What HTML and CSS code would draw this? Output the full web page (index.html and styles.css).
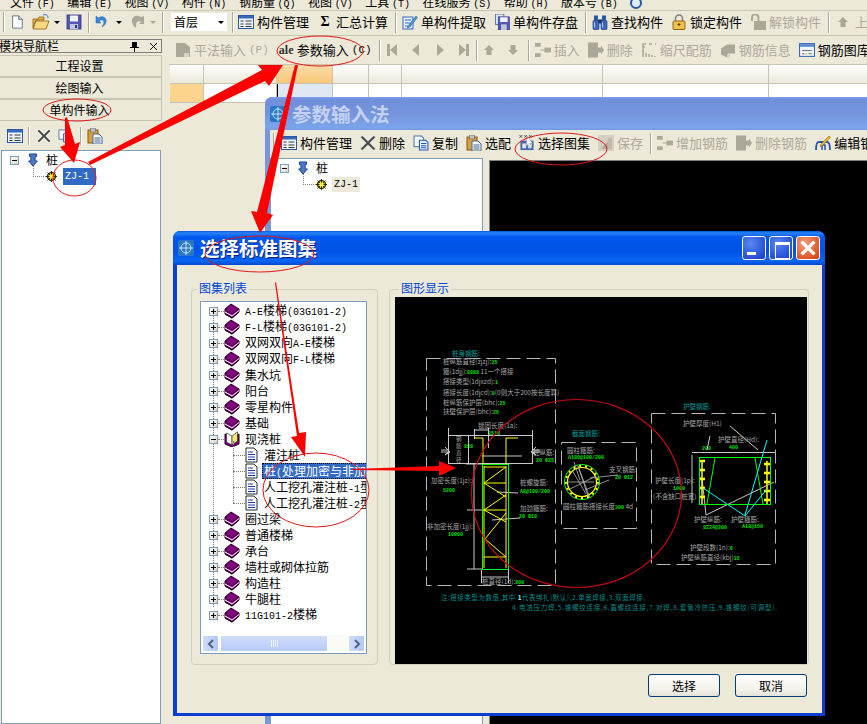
FILE: index.html
```html
<!DOCTYPE html>
<html lang="zh">
<head>
<meta charset="utf-8">
<title>参数输入法</title>
<link rel="stylesheet" href="styles.css">
</head>
<body>
<svg class="defs" width="0" height="0" aria-hidden="true">
  <defs>
    <symbol id="i-new" viewBox="0 0 16 16"><path d="M3 1h7l4 4v10H3z" fill="#fff" stroke="#5a6a80"/><path d="M10 1v4h4" fill="#c8d8e8" stroke="#5a6a80"/></symbol>
    <symbol id="i-open" viewBox="0 0 18 16"><path d="M1 5h5l1-2h5v3H4L1 14z" fill="#e8b040" stroke="#906010" stroke-width=".8"/><path d="M4 7h13l-3 8H1z" fill="#f8d880" stroke="#906010" stroke-width=".8"/><path d="M11 1c3-1 5 0 5 3" fill="none" stroke="#3070c0"/></symbol>
    <symbol id="i-save" viewBox="0 0 16 16"><rect x="1" y="1" width="14" height="14" fill="#5058b8" stroke="#303078" stroke-width=".8"/><rect x="4" y="1.500" width="8" height="6" fill="#f0f4ff"/><rect x="4" y="10" width="8" height="5" fill="#c0c8d8"/><rect x="9" y="11" width="2" height="3" fill="#303078"/></symbol>
    <symbol id="i-undo" viewBox="0 0 14 14"><path d="M3 3c5-3 9 0 8 4-.5 2-2 4-4 5 1-2 2-3 2-5 0-2-3-3-5-1l2 2H1V1z" fill="#3a88d8" stroke="#1860b0" stroke-width=".5"/></symbol>
    <symbol id="i-redo" viewBox="0 0 16 16"><path d="M12 3C7 0 2 3 3 8c.5 2 2 5 4 6 0-2 0-5 1-6 1-1 3-1 4 0l-2 2h5V2z" fill="#aca899"/></symbol>
    <symbol id="i-mgr" viewBox="0 0 16 14"><rect x=".5" y=".5" width="15" height="13" fill="#f0f4fc" stroke="#2858a8"/><rect x="1" y="1" width="14" height="2.500" fill="#3868b8"/><path d="M2.500 6h3M2.500 9h3M2.500 11.500h3M7.500 6h6M7.500 9h6M7.500 11.500h6" stroke="#303840"/></symbol>
    <symbol id="i-extract" viewBox="0 0 16 16"><rect x="1" y="3" width="10" height="12" fill="#e8f0fc" stroke="#3868b8"/><path d="M3 6h6M3 9h5M3 12h3" stroke="#3868b8"/><path d="M6 12L14 2l1.500 1.500L8 13l-3 1z" fill="#4898d8" stroke="#205890" stroke-width=".5"/></symbol>
    <symbol id="i-store" viewBox="0 0 16 17"><rect x="1" y="0" width="9" height="11" fill="#d8e4f8" stroke="#405888" stroke-width=".8"/><rect x="4" y="3" width="12" height="14" fill="#5058b8" stroke="#303078" stroke-width=".6"/><rect x="6" y="3.500" width="8" height="5" fill="#f0f4ff"/><rect x="7" y="11" width="6" height="6" fill="#c0c8d8"/></symbol>
    <symbol id="i-find" viewBox="0 0 16 15"><rect x="2" y="1" width="4" height="5" fill="#2858a8"/><rect x="10" y="1" width="4" height="5" fill="#2858a8"/><rect x="6" y="5" width="4" height="4" fill="#203860"/><rect x="1" y="6" width="6" height="9" rx="1" fill="#3868c8" stroke="#183060" stroke-width=".6"/><rect x="9" y="6" width="6" height="9" rx="1" fill="#3868c8" stroke="#183060" stroke-width=".6"/><path d="M2.500 8v5M10.500 8v5" stroke="#b8d0f0"/></symbol>
    <symbol id="i-lock" viewBox="0 0 14 16"><path d="M3.500 8V4.500a3.500 3.500 0 0 1 7 0V8" fill="none" stroke="#808080" stroke-width="1.500"/><rect x="1" y="7" width="12" height="8.500" rx="1" fill="#f0c050" stroke="#906810"/><path d="M7 9v3M5.500 10.500h3" stroke="#604000"/></symbol>
    <symbol id="i-unlock" viewBox="0 0 16 16"><path d="M2 7V3.500a3.200 3.200 0 0 1 6.400 0V7" fill="none" stroke="#aca899" stroke-width="2"/><rect x="4" y="7" width="12" height="9" fill="#aca899"/></symbol>
    <symbol id="i-up" viewBox="0 0 12 12"><path d="M6 1l5 5H8.500v5h-5V6H1z" fill="#aca899"/></symbol>
    <symbol id="i-down" viewBox="0 0 12 12"><path d="M6 11L1 6h2.500V1h5v5H11z" fill="#aca899"/></symbol>
    <symbol id="i-note" viewBox="0 0 16 16"><path d="M1 1h9l5 4v10H1z" fill="#aca899"/><rect x="9" y="11" width="5" height="4" fill="#d8d4c4"/></symbol>
    <symbol id="i-first" viewBox="0 0 12 14"><rect x="1" y="1" width="3" height="12" fill="#aca899"/><path d="M11 1v12L4 7z" fill="#aca899"/></symbol>
    <symbol id="i-prev" viewBox="0 0 12 14"><path d="M9 1v12L2 7z" fill="#aca899"/></symbol>
    <symbol id="i-next" viewBox="0 0 12 14"><path d="M3 1v12l7-6z" fill="#aca899"/></symbol>
    <symbol id="i-last" viewBox="0 0 12 14"><rect x="8" y="1" width="3" height="12" fill="#aca899"/><path d="M1 1v12l7-6z" fill="#aca899"/></symbol>
    <symbol id="i-insert" viewBox="0 0 17 15"><rect x="0" y="0" width="6" height="4" fill="#aca899"/><rect x="0" y="11" width="6" height="4" fill="#aca899"/><rect x="10" y="5" width="7" height="5" fill="#aca899"/><path d="M6 7.500h4" stroke="#aca899"/></symbol>
    <symbol id="i-remove" viewBox="0 0 16 15"><rect x="0" y="0" width="10" height="15" fill="#aca899"/><path d="M10 5h3V3l3 4.500-3 4.500v-2h-3z" fill="#aca899"/></symbol>
    <symbol id="i-scale" viewBox="0 0 14 16"><path d="M1 15V2h3M7 2h3M13 2h1M2 4v2M1 9h1M4 15v-4M7 15v-3M10 15v-2M13 15v-1" fill="none" stroke="#aca899" stroke-width="1.500"/></symbol>
    <symbol id="i-info" viewBox="0 0 16 15"><path d="M1 6l6-4h8v9H8l-1 4-6-3z" fill="#aca899"/><rect x="7" y="12" width="3" height="3" fill="#d8d4c4"/></symbol>
    <symbol id="i-lib" viewBox="0 0 15 13"><rect x=".5" y=".5" width="14" height="12" fill="#f0f4fc" stroke="#3868b8"/><rect x="1" y="1" width="13" height="2.500" fill="#5888d0"/><path d="M3 7h9" stroke="#707880"/><path d="M3 10h2" stroke="#d83020"/><path d="M6 10h2" stroke="#e8c020"/><path d="M9 10h3" stroke="#30a040"/></symbol>
    <symbol id="i-del" viewBox="0 0 14 14"><path d="M2 1l5 5 5-5 1 1-5 5 5 5-1 1-5-5-5 5-1-1 5-5-5-5z" fill="#404850" stroke="#404850" stroke-width=".6"/></symbol>
    <symbol id="i-copy" viewBox="0 0 15 15"><path d="M1 1h7l2 2v8H1z" fill="#f4f8ff" stroke="#4878b8"/><path d="M6 5h6l2 2v7H6z" fill="#e0ecff" stroke="#2858a8"/><path d="M7.500 8h5M7.500 10h5M7.500 12h5" stroke="#2858a8"/></symbol>
    <symbol id="i-paste" viewBox="0 0 16 16"><rect x="1" y="2" width="10" height="13" fill="#d8a040" stroke="#805810"/><rect x="3.500" y="0" width="5" height="4" fill="#c0c0c0" stroke="#606060" stroke-width=".6"/><path d="M6 6h6l3 3v7H6z" fill="#f4f8ff" stroke="#48688c"/><path d="M7.500 10h6M7.500 12h6M7.500 14h6" stroke="#48688c"/></symbol>
    <symbol id="i-atlas" viewBox="0 0 16 17"><path d="M0 0l3 3M3 0L0 3M5 0l3 3M8 0L5 3M10 0l3 3M13 0l-3 3" stroke="#303030" stroke-width=".8"/><rect x="1" y="6" width="14" height="10" fill="#4868b0"/><path d="M3 9h4v5H3zM9 9h4v5H9z" fill="#e0e8f8"/><path d="M8 1l6 8-3 0 2 4-2 1-2-4-2 2z" fill="#fff" stroke="#8090a0" stroke-width=".6"/></symbol>
    <symbol id="i-savegray" viewBox="0 0 15 15"><rect x="0" y="0" width="15" height="15" fill="#d4d0c0"/><path d="M3 13L13 2v11z" fill="#aca899"/><rect x="9" y="3" width="4" height="10" fill="#c0bcac"/></symbol>
    <symbol id="i-edit" viewBox="0 0 16 16"><path d="M1 15c0-6 1-8 3-8h8c2 0 3 2 3 8" fill="none" stroke="#2858a8" stroke-width="1.800"/><path d="M7 15v-5h3v5" fill="none" stroke="#2858a8" stroke-width="1.500"/><path d="M6 9L14 1l1.500 1.500-8 8-2.500 1z" fill="#e8b830" stroke="#805810" stroke-width=".5"/></symbol>
    <symbol id="i-stake" viewBox="0 0 14 16"><path d="M3 1h8v3H9.500v5H12l-5 6-5-6h2.500V4H3z" fill="#4878d0" stroke="#1c3880" stroke-width="1"/></symbol>
    <symbol id="i-gear" viewBox="0 0 11 11"><circle cx="5.500" cy="5.500" r="4" fill="#e8e020" stroke="#201000" stroke-width="1.200"/><path d="M5.500 0v11M0 5.500h11M1.500 1.500l8 8M9.500 1.500l-8 8" stroke="#302000"/><circle cx="5.500" cy="5.500" r="2" fill="#f8f040"/></symbol>
    <symbol id="i-book" viewBox="0 0 16 16"><path d="M7 1l8 5v3l-7 6-7-4V6z" fill="#800080" stroke="#200020"/><path d="M1 9l7 4 7-5.500" fill="none" stroke="#fff"/><path d="M1 11l7 4 7-6" fill="none" stroke="#200020"/><path d="M1 6l7 5 7-5" fill="none" stroke="#400040"/></symbol>
    <symbol id="i-obook" viewBox="0 0 16 16"><path d="M1 3l7 3 7-3v10l-7 3-7-3z" fill="#800080" stroke="#200020"/><path d="M2.500 2l5.500 3v9L2.500 11z" fill="#fff" stroke="#202020" stroke-width=".6"/><path d="M13.500 1L8 5v9l5.500-4z" fill="#f0e868" stroke="#202020" stroke-width=".6"/></symbol>
    <symbol id="i-doc" viewBox="0 0 13 16"><path d="M1 1h8l3 3v11H1z" fill="#fff" stroke="#202830"/><path d="M3 5h5M3 7.500h7M3 10h7M3 12.500h7" stroke="#1838b0"/></symbol>
    <symbol id="i-appicon" viewBox="0 0 16 16"><rect width="16" height="16" rx="2" fill="#2878c8"/><circle cx="8" cy="8" r="5" fill="none" stroke="#c8e8ff"/><path d="M8 1v14M1 8h14" stroke="#c8e8ff"/></symbol>
  </defs>
</svg>

<div class="app">
  <div class="menu">
    <span class="menu-item">文件 <span class="lat">(F)</span></span>
    <span class="menu-item">编辑 <span class="lat">(E)</span></span>
    <span class="menu-item">视图 <span class="lat">(V)</span></span>
    <span class="menu-item">构件 <span class="lat">(N)</span></span>
    <span class="menu-item">钢筋量 <span class="lat">(Q)</span></span>
    <span class="menu-item">视图 <span class="lat">(V)</span></span>
    <span class="menu-item">工具 <span class="lat">(T)</span></span>
    <span class="menu-item">在线服务 <span class="lat">(S)</span></span>
    <span class="menu-item">帮助 <span class="lat">(H)</span></span>
    <span class="menu-item">版本号 <span class="lat">(B)</span></span>
    <i class="menu-globe"></i>
  </div>

  <div class="toolbar toolbar-main">
    <i class="handle"></i>
    <svg class="ic w14"><use href="#i-new"/></svg>
    <svg class="ic w18 ml-8"><use href="#i-open"/></svg>
    <i class="drop"></i>
    <svg class="ic ml-6"><use href="#i-save"/></svg>
    <i class="sep"></i>
    <svg class="ic w14"><use href="#i-undo"/></svg>
    <i class="drop ml-7"></i>
    <svg class="ic ml-7"><use href="#i-redo"/></svg>
    <i class="drop gray"></i>
    <i class="sep"></i>
    <div class="combo"><span class="combo-text">首层</span><i class="drop"></i></div>
    <i class="sep tight"></i>
    <span class="tool"><svg class="ic"><use href="#i-mgr"/></svg>构件管理</span>
    <span class="tool"><b class="sigma">Σ</b>汇总计算</span>
    <i class="sep"></i>
    <span class="tool"><svg class="ic"><use href="#i-extract"/></svg>单构件提取</span>
    <span class="tool"><svg class="ic"><use href="#i-store"/></svg>单构件存盘</span>
    <i class="sep"></i>
    <span class="tool"><svg class="ic"><use href="#i-find"/></svg>查找构件</span>
    <span class="tool"><svg class="ic"><use href="#i-lock"/></svg>锁定构件</span>
    <span class="tool off"><svg class="ic"><use href="#i-unlock"/></svg>解锁构件</span>
    <i class="sep"></i>
    <span class="tool off up"><svg class="ic w12"><use href="#i-up"/></svg>上移</span>
  </div>

  <div class="workspace">
    <aside class="nav">
      <div class="nav-title"><span class="nav-title-text">模块导航栏</span><svg class="nav-pin" viewBox="0 0 9 11"><path d="M2 1h5v5h2v1H5v4H4V7H0V6h2z" fill="#000"/></svg><svg class="nav-x" viewBox="0 0 9 9"><path d="M1 1l7 7M8 1L1 8" stroke="#000" fill="none"/></svg></div>
      <div class="nav-btn nav-first">工程设置</div>
      <div class="nav-btn">绘图输入</div>
      <div class="nav-btn">单构件输入</div>
      <div class="nav-tools">
        <svg class="ic"><use href="#i-mgr"/></svg>
        <i class="sep short"></i>
        <svg class="ic w14"><use href="#i-del"/></svg>
        <svg class="ic w14 ml-7"><use href="#i-copy"/></svg>
        <i class="sep short ml-8"></i>
        <svg class="ic"><use href="#i-paste"/></svg>
      </div>
      <div class="ptree nav-tree">
        <div class="prow"><i class="exp minus"></i><svg class="ic w14 ml-7"><use href="#i-stake"/></svg><span class="ptext">桩</span></div>
        <div class="prow kid"><i class="dash stem"></i><svg class="ic w11"><use href="#i-gear"/></svg><span class="chip sel lat">ZJ-1</span></div>
      </div>
    </aside>

    <main class="main">
      <div class="toolbar toolbar-sub">
        <span class="tool off"><svg class="ic"><use href="#i-note"/></svg>平法输入<span class="lat">(P)</span></span>
        <span class="tool pick"><b class="abl">ale</b>参数输入<span class="lat">(C)</span></span>
        <i class="sep"></i>
        <svg class="ic w12"><use href="#i-first"/></svg>
        <svg class="ic w12 ml-12"><use href="#i-prev"/></svg>
        <svg class="ic w12 ml-12"><use href="#i-next"/></svg>
        <svg class="ic w12 ml-12"><use href="#i-last"/></svg>
        <i class="sep"></i>
        <svg class="ic w12"><use href="#i-up"/></svg>
        <svg class="ic w12 ml-12"><use href="#i-down"/></svg>
        <i class="sep wide"></i>
        <span class="tool off"><svg class="ic"><use href="#i-insert"/></svg>插入</span>
        <span class="tool off"><svg class="ic"><use href="#i-remove"/></svg>删除</span>
        <span class="tool off"><svg class="ic"><use href="#i-scale"/></svg>缩尺配筋</span>
        <span class="tool off"><svg class="ic"><use href="#i-info"/></svg>钢筋信息</span>
        <span class="tool"><svg class="ic"><use href="#i-lib"/></svg>钢筋图库</span>
      </div>
      <div class="grid">
        <div class="gh"></div><div class="gh"></div><div class="gh hot"></div><div class="gh"></div><div class="gh"></div><div class="gh"></div><div class="gh"></div><div class="gh"></div>
        <div class="gc hotside"></div><div class="gc"></div><div class="gc cur"></div><div class="gc"></div><div class="gc"></div><div class="gc"></div><div class="gc"></div><div class="gc"></div>
      </div>
    </main>
  </div>
</div>

<section class="win win-back">
  <header class="win-title">
    <svg class="win-icon"><use href="#i-appicon"/></svg>
    <span class="win-name">参数输入法</span>
  </header>
  <div class="toolbar toolbar-back">
    <i class="handle"></i>
    <span class="tool"><svg class="ic"><use href="#i-mgr"/></svg>构件管理</span>
    <span class="tool"><svg class="ic"><use href="#i-del"/></svg>删除</span>
    <span class="tool"><svg class="ic"><use href="#i-copy"/></svg>复制</span>
    <span class="tool"><svg class="ic"><use href="#i-paste"/></svg>选配</span>
    <span class="tool"><svg class="ic"><use href="#i-atlas"/></svg>选择图集</span>
    <span class="tool off"><svg class="ic"><use href="#i-savegray"/></svg>保存</span>
    <i class="sep"></i>
    <span class="tool off"><svg class="ic"><use href="#i-insert"/></svg>增加钢筋</span>
    <span class="tool off"><svg class="ic"><use href="#i-remove"/></svg>删除钢筋</span>
    <span class="tool"><svg class="ic"><use href="#i-edit"/></svg>编辑钢筋</span>
  </div>
  <div class="win-back-body">
    <div class="ptree back-tree">
      <div class="prow"><i class="exp minus"></i><svg class="ic w14 ml-7"><use href="#i-stake"/></svg><span class="ptext">桩</span></div>
      <div class="prow kid"><i class="dash stem"></i><svg class="ic w11"><use href="#i-gear"/></svg><span class="chip lat">ZJ-1</span></div>
    </div>
    <div class="back-canvas"></div>
  </div>
</section>

<section class="win win-front">
  <header class="win-title">
    <svg class="win-icon"><use href="#i-appicon"/></svg>
    <span class="win-name">选择标准图集</span>
    <div class="win-btns">
      <button class="wb wb-min" aria-label="最小化"></button>
      <button class="wb wb-max" aria-label="最大化"></button>
      <button class="wb wb-close" aria-label="关闭"><svg viewBox="0 0 14 14"><path d="M2 2l10 10M12 2L2 12" stroke="#fff" stroke-width="2.600" fill="none"/></svg></button>
    </div>
  </header>
  <div class="dlg-body">
    <div class="dlg-groups">
      <fieldset class="group group-list">
        <legend class="legend">图集列表</legend>
        <div class="list-box">
          <div class="list-rows">
            <div class="row"><i class="exp"></i><i class="dash"></i><svg class="ic"><use href="#i-book"/></svg><span class="rtext"><span class="lat">A-E</span>楼梯<span class="lat">(03G101-2)</span></span></div>
            <div class="row"><i class="exp"></i><i class="dash"></i><svg class="ic"><use href="#i-book"/></svg><span class="rtext"><span class="lat">F-L</span>楼梯<span class="lat">(03G101-2)</span></span></div>
            <div class="row"><i class="exp"></i><i class="dash"></i><svg class="ic"><use href="#i-book"/></svg><span class="rtext">双网双向<span class="lat">A-E</span>楼梯</span></div>
            <div class="row"><i class="exp"></i><i class="dash"></i><svg class="ic"><use href="#i-book"/></svg><span class="rtext">双网双向<span class="lat">F-L</span>楼梯</span></div>
            <div class="row"><i class="exp"></i><i class="dash"></i><svg class="ic"><use href="#i-book"/></svg><span class="rtext">集水坑</span></div>
            <div class="row"><i class="exp"></i><i class="dash"></i><svg class="ic"><use href="#i-book"/></svg><span class="rtext">阳台</span></div>
            <div class="row"><i class="exp"></i><i class="dash"></i><svg class="ic"><use href="#i-book"/></svg><span class="rtext">零星构件</span></div>
            <div class="row"><i class="exp"></i><i class="dash"></i><svg class="ic"><use href="#i-book"/></svg><span class="rtext">基础</span></div>
            <div class="row"><i class="exp minus"></i><i class="dash"></i><svg class="ic"><use href="#i-obook"/></svg><span class="rtext">现浇桩</span></div>
            <div class="kids">
              <div class="row"><i class="dash long"></i><svg class="ic w13"><use href="#i-doc"/></svg><span class="ktext">灌注桩</span></div>
              <div class="row"><i class="dash long"></i><svg class="ic w13"><use href="#i-doc"/></svg><span class="ktext selected">桩<span class="lat">(</span>处理加密与非加密<span class="lat">)</span></span></div>
              <div class="row"><i class="dash long"></i><svg class="ic w13"><use href="#i-doc"/></svg><span class="ktext">人工挖孔灌注桩<span class="lat">-1</span>型</span></div>
              <div class="row"><i class="dash long"></i><svg class="ic w13"><use href="#i-doc"/></svg><span class="ktext">人工挖孔灌注桩<span class="lat">-2</span>型</span></div>
            </div>
            <div class="row"><i class="exp"></i><i class="dash"></i><svg class="ic"><use href="#i-book"/></svg><span class="rtext">圈过梁</span></div>
            <div class="row"><i class="exp"></i><i class="dash"></i><svg class="ic"><use href="#i-book"/></svg><span class="rtext">普通楼梯</span></div>
            <div class="row"><i class="exp"></i><i class="dash"></i><svg class="ic"><use href="#i-book"/></svg><span class="rtext">承台</span></div>
            <div class="row"><i class="exp"></i><i class="dash"></i><svg class="ic"><use href="#i-book"/></svg><span class="rtext">墙柱或砌体拉筋</span></div>
            <div class="row"><i class="exp"></i><i class="dash"></i><svg class="ic"><use href="#i-book"/></svg><span class="rtext">构造柱</span></div>
            <div class="row"><i class="exp"></i><i class="dash"></i><svg class="ic"><use href="#i-book"/></svg><span class="rtext">牛腿柱</span></div>
            <div class="row"><i class="exp"></i><i class="dash"></i><svg class="ic"><use href="#i-book"/></svg><span class="rtext"><span class="lat">11G101-2</span>楼梯</span></div>
          </div>
          <div class="hscroll">
            <div class="sb-btn"><svg viewBox="0 0 8 10"><path d="M6 1L2 5l4 4" fill="none" stroke="#4d6185" stroke-width="2"/></svg></div>
            <div class="sb-thumb"><i></i><i></i><i></i><i></i></div>
            <div class="sb-track"></div>
            <div class="sb-btn"><svg viewBox="0 0 8 10"><path d="M2 1l4 4-4 4" fill="none" stroke="#4d6185" stroke-width="2"/></svg></div>
          </div>
        </div>
      </fieldset>

      <fieldset class="group group-view">
        <legend class="legend">图形显示</legend>
        <div class="canvas">
          <svg class="drawing" viewBox="395 297 412 367">
            <g class="dashbox">
              <rect x="426.500" y="358.500" width="129" height="227"/>
              <rect x="561.500" y="442.500" width="75" height="86"/>
              <rect x="651.500" y="413.500" width="124" height="151"/>
            </g>
            <text class="t c" x="452" y="356">桩身钢筋:</text>
            <text class="t" x="443" y="364">桩纵筋直径(zjzj):<tspan class="g">25</tspan></text>
            <text class="t" x="443" y="374">箍(1djj):<tspan class="g">8888</tspan> 11一个搭接</text>
            <text class="t" x="443" y="384">搭接类型(1djxzd):<tspan class="g">1</tspan></text>
            <text class="t" x="443" y="395">搭接长度(1djcd):<tspan class="g">0</tspan>(0则大于200按长度算)</text>
            <text class="t" x="443" y="405">桩纵筋保护层(bhc):<tspan class="g">25</tspan></text>
            <text class="t" x="443" y="414">扶壁保护层(bhc):<tspan class="g">25</tspan></text>
            <text class="t" x="478" y="428">锁固长度(1a):</text>
            <text class="t g" x="488" y="435">35*d</text>
            <text class="t" x="431" y="483">加密长度(1jz):</text>
            <text class="t g" x="443" y="492">5200</text>
            <text class="t" x="427" y="529">非加密长度(1jj):</text>
            <text class="t g" x="448" y="536">10000</text>
            <text class="t" x="533" y="455">桩纵筋:</text>
            <text class="t g" x="536" y="462">20 Φ25</text>
            <text class="t" x="520" y="485">桩螺旋筋:</text>
            <text class="t g" x="520" y="493">A8@100/200</text>
            <text class="t" x="520" y="511">加劲箍筋:</text>
            <text class="t g" x="519" y="518">20 Φ18</text>
            <text class="t" x="482" y="584">桩直径(1d):<tspan class="g">800</tspan></text>
            <text class="t v" x="456" y="441">钢</text>
            <text class="t v" x="456" y="448">筋</text>
            <text class="t v" x="456" y="455">直</text>
            <text class="t v" x="456" y="462">径</text>
            <text class="t g" x="464" y="448">888</text>
            <g class="wl">
              <path d="M448.500 428v36M448.500 435.500h84M448.500 463.500h84M532.500 430v34"/>
              <path d="M474.500 429v10M474.500 430h14M488.500 428v20"/>
              <path d="M441 450h7l-3-3 5 5-5 3 3-3h-7"/>
              <path d="M540 450h-7l3-3-5 5 5 3-3-3h7"/>
              <path d="M468.500 435v29"/>
              <path d="M474 464v105M466 464h16M467 510h17M467 569h15"/>
              <path d="M481.500 570v13M508.500 570v13M481.500 577h27"/>
              <path d="M482 456h40M497 492l21 1M492 520l28-2"/>
            </g>
            <g class="yl">
              <path d="M474 438h9v26M518 438h-12v26"/>
              <path d="M484 466v102M506 466v102M484 467h22M484 557h22"/>
              <path d="M484 483l22-16M484 483l22 14M484 510l22-15M484 510l22 12M485 539l21-26M485 539l21 18M484 483h22M484 510h22"/>
            </g>
            <rect class="grect" x="482.500" y="464.500" width="26" height="105"/>

            <text class="t c" x="572" y="436">截面钢筋:</text>
            <text class="t" x="567" y="453">圆柱箍筋:</text>
            <text class="t g" x="568" y="459">A180@100/200</text>
            <text class="t" x="563" y="509">圆柱箍筋搭接长度<tspan class="g">300</tspan> 4d</text>
            <text class="t" x="609" y="472">支叉钢筋:</text>
            <text class="t g" x="615" y="479">20 Φ12</text>
            <circle cx="582" cy="482" r="17.500" class="gc0"/>
            <circle cx="582" cy="482" r="14.500" class="yc"/>
            <circle cx="582" cy="482" r="16" class="ydots"/>
            <path class="wl thin" d="M578 466l12 32M566 482h28M572 470l14 24M568 490l28-14M578 466l10 30M574 462l6 18M590 478l28-3M585 490l24-10"/>

            <text class="t c" x="683" y="409">护壁钢筋:</text>
            <text class="t" x="683" y="426">护壁厚度(H1)</text>
            <text class="t" x="718" y="442">护壁直径(Hd):</text>
            <text class="t g" x="702" y="450">200</text>
            <text class="t g" x="729" y="449">400</text>
            <text class="t" x="655" y="483">护壁长度(1p):</text>
            <text class="t g" x="673" y="490">1000</text>
            <text class="t" x="653" y="499">(不含缺口桩宽)</text>
            <text class="t" x="694" y="522">护壁纵筋:</text>
            <text class="t" x="731" y="522">护壁箍筋:</text>
            <text class="t g" x="703" y="529">8Z24@200</text>
            <text class="t g" x="742" y="528">A18@150</text>
            <text class="t" x="690" y="550">护壁段数(1n):<tspan class="g">6</tspan></text>
            <text class="t" x="681" y="560">护壁纵筋直径(kbj)<tspan class="g">32</tspan></text>
            <path class="wl" d="M692 452.500h83M710 436l-3 14M730 426l28 24M692 455v48M706 515l-4-37h-2M706 515l68-33"/>
            <rect class="grect" x="699.500" y="457.500" width="71" height="47"/>
            <path class="gl" d="M715 458l-8 46M755 458l8 46"/>
            <path class="yl fat" d="M702 461v43M767 461v43"/>
            <path class="yl dotty" d="M700 461h5M700 470h5M700 479h5M700 488h5M700 497h5M764 464h6M764 473h6M764 482h6M764 491h6M764 500h6"/>
            <path class="cl" d="M703 488l42 28 22-27M745 515l22-75"/>

            <text class="n" x="441" y="600" textLength="204">注:搭接类型为数值,其中 <tspan class="w">1</tspan>代表绑扎(默认),2.单面焊接,3.双面焊接,</text>
            <text class="n" x="512" y="610" textLength="265">4.电渣压力焊,5.锥螺纹连接,6.直螺纹连接,7.对焊,8.套管冷挤压,9.锥螺纹(可调型).</text>
          </svg>
        </div>
      </fieldset>
    </div>
    <div class="dlg-actions">
      <button class="btn">选择</button>
      <button class="btn">取消</button>
    </div>
  </div>
</section>

<svg class="marks" viewBox="0 0 867 724" aria-hidden="true">
  <g class="ring">
    <ellipse cx="77" cy="110" rx="34" ry="11"/>
    <ellipse cx="74.500" cy="178" rx="21.500" ry="18"/>
    <ellipse cx="320" cy="51" rx="43" ry="15"/>
    <ellipse cx="561" cy="149" rx="46" ry="16"/>
    <ellipse cx="259.500" cy="254" rx="54.500" ry="18"/>
    <ellipse cx="316" cy="490" rx="53" ry="37"/>
    <ellipse cx="576.500" cy="493.500" rx="105" ry="94" class="ring-big"/>
  </g>
  <g class="arrow">
    <path d="M65 118l2-1 8 27 5-2-6 21-14-16 5-2z"/>
    <path d="M90 165l-2-3 174-92-4-5 25 0-14 21-4-5z"/>
    <path d="M298 65l-3 0-38 147-6-1 9 22 13-18-6-2z"/>
    <path d="M275 283l1-1 23 151 7-1-1 25-14-20 6-1z"/>
    <path d="M352 469l87-3v-5l17 7-17 8v-5l-87-1z"/>
  </g>
</svg>
</body>
</html>
```
FILE: styles.css
```css
* { box-sizing: border-box; }
html, body { margin: 0; padding: 0; height: 100%; }
body {
  width: 867px;
  height: 724px;
  overflow: hidden;
  position: relative;
  background: #ece9d8;
  font: 13px/16px "Noto Sans CJK SC", "Liberation Sans", sans-serif;
  color: #000;
}
.defs { position: absolute; }
.lat { font-family: "Liberation Mono", monospace; font-size: 11px; }

.ic { width: 16px; height: 16px; flex: none; display: block; }
.w11 { width: 11px; height: 11px; }
.w12 { width: 12px; height: 14px; }
.w13 { width: 13px; }
.w14 { width: 14px; height: 14px; }
.w18 { width: 18px; }
.ml-6 { margin-left: 6px; }
.ml-7 { margin-left: 7px; }
.ml-8 { margin-left: 8px; }
.ml-12 { margin-left: 12px; }

.app { display: flex; flex-direction: column; height: 100%; }

.menu {
  height: 10px;
  overflow: hidden;
  display: flex;
  align-items: flex-end;
  padding-left: 10px;
  gap: 12.500px;
  flex: none;
  font-size: 12px;
}
.menu .lat { font-size: 10px; }
.menu-item { display: block; white-space: nowrap; height: 16px; flex: none; }
.menu-globe { width: 12px; height: 12px; border-radius: 50%; border: 2px solid #2858a8; background: #e0ecff; margin-bottom: 1px; flex: none; display: block; }

.toolbar {
  display: flex;
  align-items: center;
  white-space: nowrap;
  overflow: hidden;
  flex: none;
}
.toolbar-main {
  height: 26px;
  padding-left: 3px;
  padding-bottom: 2px;
  border-top: 1px solid #c8c5b2;
  border-bottom: 1px solid #c8c5b2;
}
.toolbar-main .handle { margin-right: 5px; }
.toolbar-sub { height: 29px; padding-left: 6px; border-bottom: 1px solid #c8c5b2; }
.toolbar-back { height: 26px; padding-left: 3px; margin-bottom: 2px; }
.toolbar-back .handle { margin-right: 6px; }

.handle { width: 2px; height: 20px; border-left: 1px solid #aca899; border-right: 1px solid #fff; flex: none; display: block; }
.sep { width: 2px; height: 21px; margin: 0 5px 0 6px; flex: none; display: block; background: linear-gradient(90deg, #aca899 50%, #fff 50%); }
.tool + .sep { margin-left: -1px; }
.sep.tight { margin: 0 4px 0 5px; }
.sep.wide { margin-left: 9px; }
.sep.short { height: 18px; margin: 0 7px 0 5px; }
.sep.short.ml-8 { margin: 0 5px 0 8px; }
.drop { width: 0; height: 0; margin-left: 4px; border: 3px solid transparent; border-top: 3px solid #000; border-bottom: 0; flex: none; display: block; }
.drop.gray { border-top-color: #aca899; margin-left: 5px; }
.drop.ml-7 { margin-left: 7px; }

.tool { display: inline-flex; align-items: center; gap: 3px; margin-right: 8px; flex: none; }
.tool.off { color: #aca899; }
.tool.up { margin-left: 2px; gap: 6px; }
.sigma { font: bold 14px "Liberation Serif", serif; width: 16px; text-align: center; }
.abl { font: bold 12px "Liberation Serif", serif; color: #303030; width: 15px; margin-left: 2px; }

.combo {
  width: 56px;
  height: 18px;
  background: #fff;
  margin-left: 2px;
  display: flex;
  align-items: center;
  justify-content: space-between;
  padding: 0 3px 0 3px;
  flex: none;
}
.combo-text { font-size: 12px; }

.workspace { flex: 1; display: flex; min-height: 0; }

.nav { width: 162px; flex: none; display: flex; flex-direction: column; padding-top: 3px; margin-right: 7px; font-size: 12px; }
.nav .lat { font-size: 10px; }
.nav-title {
  height: 14px;
  display: flex;
  align-items: center;
  border-top: 1px solid #808078;
  border-bottom: 1px solid #808078;
  border-right: 1px solid #808078;
  white-space: nowrap;
  overflow: hidden;
}
.nav-title-text { margin-left: -1px; flex: 1; }
.nav-pin { width: 9px; height: 11px; margin-right: 10px; }
.nav-x { width: 9px; height: 9px; margin-right: 3px; }
.nav-btn {
  height: 22px;
  text-align: center;
  line-height: 20px;
  border: 1px solid #c8c5b2;
  border-left: 0;
  padding-right: 2px;
}
.nav-first { margin-top: 2px; }
.nav-tools { height: 29px; display: flex; align-items: center; padding: 0 0 0 7px; flex: none; }
.ptree { background: #fff; border: 1px solid #7f9db9; }
.nav-tree { flex: 1; margin-left: 1px; margin-right: 1px; padding-left: 8px; padding-top: 1px; }
.back-tree { width: 213px; flex: none; padding-left: 9px; padding-top: 1px; font-size: 12px; }
.back-tree .lat { font-size: 10px; }
.prow { display: flex; align-items: center; height: 16px; }
.prow.kid { padding-left: 23px; position: relative; }
.prow.kid::before { content: ""; position: absolute; left: 23px; top: -7px; height: 14px; border-left: 1px dotted #808080; }
.ptext { margin-left: 6px; }
.chip { margin-left: 5px; padding: 0 2px; background: #ece9d8; height: 15px; line-height: 15px; width: 28px; white-space: nowrap; flex: none; }
.chip.sel { background: #316ac5; color: #fff; height: 17px; line-height: 17px; width: 33px; margin-left: 6px; }

.main { flex: 1; display: flex; flex-direction: column; min-width: 0; }
.grid {
  display: grid;
  grid-template-columns: 34px 73px 56px 36px 33px 201px 166px 99px;
  grid-template-rows: 19px 19px;
  margin-left: 1px;
  background: #fff;
}
.gh { background: linear-gradient(#fff, #ece9d8); border-right: 1px solid #c6c3b4; border-bottom: 1px solid #c6c3b4; }
.gh.hot { background: linear-gradient(#f9dcaa, #f9c878); }
.gc { background: #fff; border-right: 1px solid #c6c3b4; border-bottom: 1px solid #c6c3b4; }
.hotside { background: #fdd48e; }
.cur { background: #e0e8f4; border-left: 1px solid #000; }

.win { position: absolute; display: flex; flex-direction: column; }
.win-back {
  left: 265px;
  top: 97px;
  width: 640px;
  height: 660px;
  background: #ece9d8;
  border: 1px solid #7896dc;
  border-width: 0 0 0 5px;
  border-radius: 7px 0 0 0;
}
.win-back .win-title {
  background: linear-gradient(#7b9fe8 0, #6f8fdc 8%, #7694dc 50%, #7aa4ea 92%, #7898e0 100%);
  margin-left: -5px;
  height: 33px;
  border-radius: 7px 0 0 0;
}
.win-back .win-name { color: #c4d2f2; font-weight: 700; }
.win-title { display: flex; align-items: center; height: 34px; padding-left: 5px; flex: none; }
.win-icon { width: 16px; height: 16px; flex: none; }
.win-name { font-size: 19.500px; line-height: 24px; margin-left: 6px; white-space: nowrap; }
.win-back-body { flex: 1; display: flex; min-height: 0; }
.back-canvas { background: #000; margin-left: 6px; margin-top: 2px; flex: 1; border: 1px solid #808080; border-width: 1px 0 0 1px; }

.win-front {
  left: 173px;
  top: 231px;
  width: 652px;
  height: 485px;
  background: #0a3fd0;
  border-radius: 7px 7px 0 0;
  padding: 0 3px 3px 4px;
}
.win-front .win-title {
  background: linear-gradient(#0a58e0 0, #2a82f8 6%, #0058ee 18%, #0052e4 60%, #0a66f4 88%, #0048d0 100%);
  margin: 0 -3px 0 -4px;
  border-radius: 7px 7px 0 0;
}
.win-front .win-name { color: #fff; font-weight: 700; text-shadow: 1px 1px 0 #0a2080; }
.win-btns { margin-left: auto; display: flex; gap: 3px; padding-right: 5px; }
.wb {
  width: 24px;
  height: 24px;
  padding: 0;
  border: 1px solid #fff;
  border-radius: 3px;
  background: radial-gradient(circle at 35% 30%, #5888f0, #2850d8 70%, #2040c0);
  position: relative;
  display: block;
}
.wb-min::after { content: ""; position: absolute; left: 4px; bottom: 4px; width: 9px; height: 3px; background: #fff; }
.wb-max::after { content: ""; position: absolute; left: 5px; top: 5px; width: 13px; height: 13px; border: 1px solid #fff; border-top-width: 3px; }
.wb-close { background: radial-gradient(circle at 35% 30%, #f0a080, #e05828 70%, #c84010); }
.wb-close svg { width: 18px; height: 18px; display: block; margin: 2px; }

.dlg-body { flex: 1; background: #ece9d8; padding: 18px 0 0 14px; display: flex; flex-direction: column; min-height: 0; font-size: 12px; }
.dlg-body .lat { font-size: 10px; }
.dlg-groups { display: flex; gap: 11px; height: 382px; flex: none; }
.group { margin: 0; min-width: 0; border: 1px solid #d0d0bf; border-radius: 4px; }
.legend { padding: 0 2px; color: #0046d5; line-height: 13px; font-size: 12px; position: relative; top: -2px; }
.group-list { width: 187px; padding: 5px 10px 10px 8px; }
.group-list .legend { margin-left: -3px; }
.group-view { width: 420px; padding: 1px 1px 0 5px; }
.group-view .legend { margin-left: 4px; }

.list-box { width: 167px; height: 353px; background: #fff; border: 1px solid #7f9db9; display: flex; flex-direction: column; overflow: hidden; }
.list-rows { padding-top: 1px; flex: none; position: relative; }
.list-rows::before { content: ""; position: absolute; left: 12px; top: 9px; bottom: 16px; border-left: 1px dotted #808080; }
.row { display: flex; align-items: center; height: 16px; padding-left: 8px; white-space: nowrap; position: relative; }
.exp { width: 9px; height: 9px; border: 1px solid #7f9db9; background: linear-gradient(135deg, #fff, #d8d4c4); flex: none; display: block; position: relative; }
.exp::before { content: ""; position: absolute; left: 1px; right: 1px; top: 3px; height: 1px; background: #000; }
.exp::after { content: ""; position: absolute; top: 1px; bottom: 1px; left: 3px; width: 1px; background: #000; }
.exp.minus::after { display: none; }
.dash { width: 6px; height: 0; border-top: 1px dotted #808080; flex: none; display: block; }
.dash.long { width: 12px; }
.dash.stem { width: 13px; }
.rtext { margin-left: 5px; }
.kids { position: relative; }
.kids .row { padding-left: 32px; }
.kids::before { content: ""; position: absolute; left: 32px; top: -6px; bottom: 8px; border-left: 1px dotted #808080; }
.ktext { margin-left: 4px; flex: none; padding: 0 2px; height: 16px; }
.selected { background: #316ac5; color: #fff; outline: 1px dotted #000; outline-offset: -1px; }

.hscroll { margin-top: auto; margin-bottom: 1px; height: 17px; display: flex; padding: 0 1px; gap: 1px; background: #fafaf6; }
.sb-btn { width: 17px; height: 17px; background: linear-gradient(90deg, #cfdcf8, #b4c8f6); border: 1px solid #fff; border-radius: 2px; display: flex; align-items: center; justify-content: center; flex: none; }
.sb-btn svg { width: 8px; height: 10px; display: block; }
.sb-thumb { width: 108px; flex: none; background: linear-gradient(#d0dcfa, #b8ccf8); border: 1px solid #fff; border-radius: 2px; display: flex; align-items: center; justify-content: center; gap: 1px; }
.sb-thumb i { width: 1px; height: 7px; background: #eef3ff; display: block; }
.sb-track { flex: 1; }

.canvas { width: 412px; height: 367px; background: #000; overflow: hidden; }
.drawing { width: 412px; height: 367px; display: block; font-family: "Noto Sans CJK SC", sans-serif; }
.drawing .t { font-size: 6.500px; fill: #a8a8a8; }
.drawing .t.v { font-size: 5.500px; }
.drawing .g, .drawing tspan.g { fill: #00e000; font-family: "Liberation Mono", monospace; font-size: 5px; font-weight: 700; }
.drawing .t.c { fill: #009c9c; }
.drawing .n { font-size: 6.500px; fill: #008c8c; }
.drawing tspan.w { fill: #80ffff; font-weight: 700; }
.drawing .dashbox rect { fill: none; stroke: #b8b8b8; stroke-width: 1; stroke-dasharray: 14 6; }
.wl { fill: none; stroke: #c8c8c8; stroke-width: 1; }
.wl.thin { stroke-width: .8; stroke: #b8b8b8; }
.yl { fill: none; stroke: #ffff00; stroke-width: 1; }
.yl.fat { stroke-width: 1.500; }
.yl.dotty { stroke-width: 2.500; }
.gl { fill: none; stroke: #00ff00; stroke-width: 1; }
.cl { fill: none; stroke: #00ffff; stroke-width: 1; }
.grect { fill: none; stroke: #00ff00; stroke-width: 1; }
.gc0 { fill: none; stroke: #00ff00; stroke-width: 1; }
.yc { fill: none; stroke: #ffff00; stroke-width: 1.200; }
.ydots { fill: none; stroke: #ffff00; stroke-width: 2; stroke-dasharray: 2 4; }

.dlg-actions { display: flex; justify-content: flex-end; gap: 15px; padding: 9px 15px 0 0; }
.btn {
  width: 72px;
  height: 23px;
  padding: 0;
  border: 1px solid #003c74;
  border-radius: 3px;
  background: linear-gradient(#fff, #f2f1ea 70%, #e4e2d8);
  font: 12px/16px "Noto Sans CJK SC", sans-serif;
  color: #000;
}

.marks { position: absolute; left: 0; top: 0; width: 867px; height: 724px; pointer-events: none; }
.ring ellipse { fill: none; stroke: #e01818; stroke-width: 1; }
.ring .ring-big { stroke: #c00c0c; stroke-width: 1.200; }
.arrow path { fill: #ff0000; }
```
